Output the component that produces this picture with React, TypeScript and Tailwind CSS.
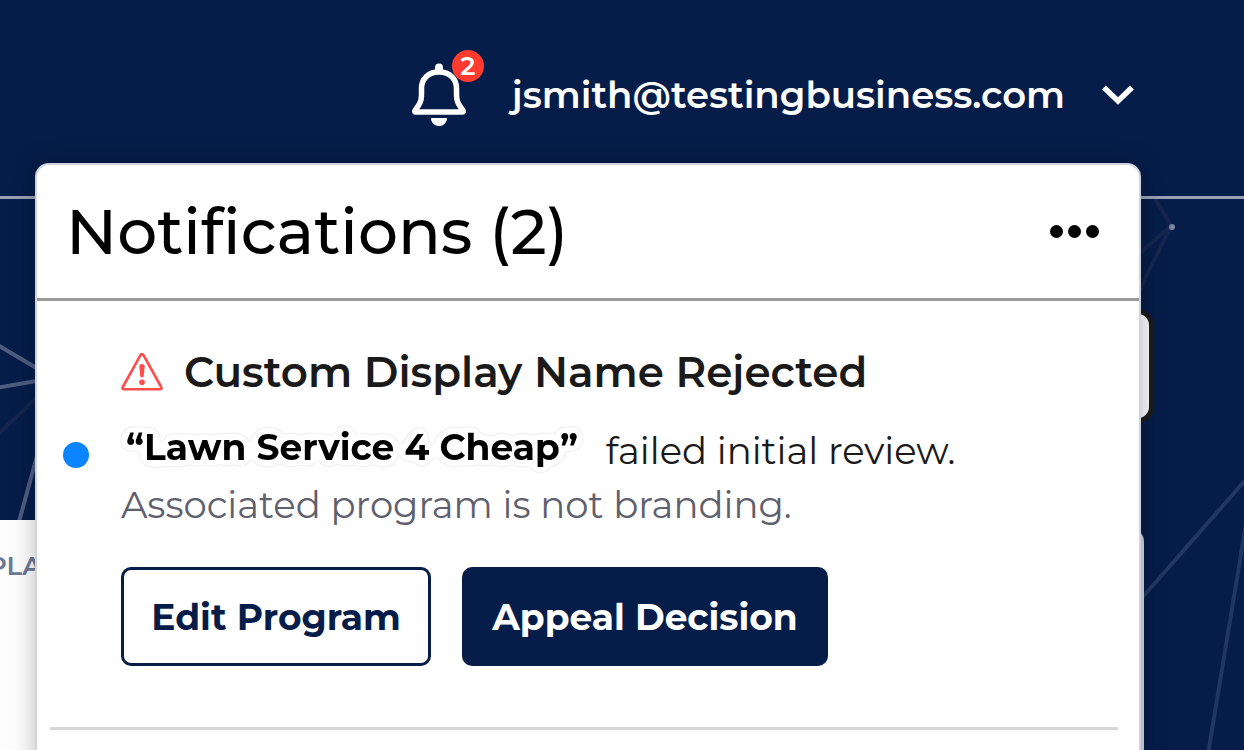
import { useState } from "react";

const account = "jsmith@testingbusiness.com";
const unread = 2;

function BellIcon() {
  return (
    <svg viewBox="0 0 56 64" className="h-16 w-14" fill="none" aria-hidden="true">
      <circle cx="28" cy="4.500" r="4" fill="white" />
      <path d="M24 4.500H32V9H24Z" fill="white" />
      <path
        d="M28 9C17 9 10.500 16 10.500 25.500V32C10.500 39 8 42 4 47.500Q3 49 5 49H51Q53 49 52 47.500C48 42 45.500 39 45.500 32V25.500C45.500 16 39 9 28 9Z"
        stroke="white"
        strokeWidth="5.500"
        strokeLinejoin="round"
      />
      <path d="M20 55H36C36 59.500 32.500 63 28 63S20 59.500 20 55Z" fill="white" />
    </svg>
  );
}

function WarningIcon() {
  return (
    <svg viewBox="0 0 42 38" className="h-[38px] w-[42px] shrink-0" fill="none" aria-hidden="true">
      <path
        d="M19.500 2.200L1.800 34Q0.800 36.200 3 36.200H39Q41.200 36.200 40.200 34L22.500 2.200Q21 0 19.500 2.200Z"
        stroke="#ff4d4d"
        strokeWidth="2.600"
        strokeLinejoin="round"
      />
      <path d="M18.300 13Q18.300 11 21 11T23.700 13L22.700 23.500Q21 25.500 19.300 23.500Z" fill="#ff4d4d" />
      <circle cx="21" cy="29.200" r="2.800" fill="#ff4d4d" />
    </svg>
  );
}

// Constellation pattern behind the hero area
function HeroLines() {
  return (
    <svg viewBox="0 0 1244 750" className="absolute top-0 left-0 h-[750px] w-[1244px]" fill="none" aria-hidden="true">
      <g stroke="#4d5d82" strokeWidth="4">
        <path d="M-4 344L60 382" />
        <path d="M-4 388L60 377" />
        <path d="M40 445L14 540" />
      </g>
      <g stroke="#14264f" strokeWidth="4">
        <path d="M-4 436L60 376" />
        <path d="M1154 196L1171 226L1120 270M1171 226L1130 310" />
      </g>
      <g stroke="#213660" strokeWidth="4">
        <path d="M1140 600L1250 475" />
        <path d="M1250 500L1207 760" />
      </g>
      <circle cx="1172" cy="227" r="3" fill="#7785a3" />
    </svg>
  );
}

// Soft rounded outline that follows the letters
function OutlineFilter() {
  return (
    <svg className="absolute size-0" aria-hidden="true">
      <filter id="outline" x="-10%" y="-50%" width="120%" height="200%" colorInterpolationFilters="sRGB">
        <feGaussianBlur in="SourceAlpha" stdDeviation="4" />
        <feComponentTransfer result="outer">
          <feFuncA type="linear" slope="60" intercept="-1.200" />
        </feComponentTransfer>
        <feMorphology in="outer" operator="erode" radius="1" result="inner" />
        <feFlood floodColor="#f1f1f1" />
        <feComposite in2="outer" operator="in" result="edge" />
        <feFlood floodColor="#ffffff" />
        <feComposite in2="inner" operator="in" result="body" />
        <feMerge>
          <feMergeNode in="edge" />
          <feMergeNode in="body" />
          <feMergeNode in="SourceGraphic" />
        </feMerge>
      </filter>
    </svg>
  );
}

function Notification() {
  return (
    <li className="mr-[21px] ml-[13px] border-b-[3px] border-[#d6d6d6] pt-[43px] pb-[61px]">
      <div className="ml-[71px]">
        <div className="flex items-center gap-[21px]">
          <WarningIcon />
          <h2 className="text-[42px] leading-[56px] font-semibold whitespace-nowrap text-[#1a1a1a]">
            Custom Display Name Rejected
          </h2>
        </div>
        <div className="mt-[23px] -ml-[58px] flex items-center">
          <span className="mr-[37px] size-[26px] shrink-0 rounded-full bg-[#0a84ff]" />
          <p className="flex items-center gap-[28px] text-[37px] leading-[48px] whitespace-nowrap text-[#1a1a1a]">
            <strong className="pb-4 text-[36px] font-bold text-black [filter:url(#outline)]">
              “Lawn Service 4 Cheap”
            </strong>
            <span className="pb-2">failed initial review.</span>
          </p>
        </div>
        <p className="-mt-2 text-[37px] leading-[52px] whitespace-nowrap text-[#5f606e]">
          Associated program is not branding.
        </p>
        <div className="mt-9 flex gap-[31px]">
          <button className="h-[99px] w-[310px] rounded-[10px] border-[3px] border-[#061d49] bg-white text-[36px] font-bold whitespace-nowrap text-[#061d49]">
            Edit Program
          </button>
          <button className="h-[99px] w-[366px] rounded-[10px] bg-[#061d49] text-[36px] font-bold whitespace-nowrap text-white">
            Appeal Decision
          </button>
        </div>
      </div>
    </li>
  );
}

function NotificationPanel() {
  return (
    <section className="absolute top-[163px] right-[103px] left-[35px] h-[640px] rounded-t-[14px] border-2 border-[#cfd3de] bg-white shadow-[0_0_24px_rgba(0,0,0,0.25)]">
      <header className="flex h-[136px] items-center justify-between border-b-[3px] border-[#999] pr-10 pl-[29px]">
        <h1 className="text-[63px] leading-[80px] font-medium whitespace-nowrap text-black [font-variant-ligatures:none]">
          Notifications ({unread})
        </h1>
        <button aria-label="More options" className="flex gap-[5px]">
          <span className="size-[13px] rounded-full bg-black" />
          <span className="size-[13px] rounded-full bg-black" />
          <span className="size-[13px] rounded-full bg-black" />
        </button>
      </header>
      <ul>
        <Notification />
      </ul>
    </section>
  );
}

export default function App() {
  const [open, setOpen] = useState(true);

  return (
    <div className="relative flex h-screen min-h-[750px] flex-col overflow-hidden bg-[#061d49] font-['Montserrat','Inter',sans-serif]">
      <OutlineFilter />
      <HeroLines />
      <header className="relative flex h-[199px] items-start justify-end border-b-[3px] border-[#97a1b6] bg-[#061d49] pt-[63px] pr-[109px]">
        <button aria-label="Notifications" className="relative mr-[45px]" onClick={() => setOpen(!open)}>
          <BellIcon />
          <span className="absolute -top-[13px] -right-[17px] flex size-8 items-center justify-center rounded-full bg-[#ff3b30] text-[26px] font-semibold text-white">
            {unread}
          </span>
        </button>
        <button className="flex h-16 items-center gap-[36px] text-[37px] font-semibold whitespace-nowrap text-white">
          {account}
          <svg viewBox="0 0 34 20" className="h-5 w-[34px]" fill="none" aria-hidden="true">
            <path d="M3 2.500L17 16L31 2.500" stroke="white" strokeWidth="5.500" />
          </svg>
        </button>
      </header>
      <main className="relative flex grow flex-col">
        <div className="grow">
          <div className="mt-[110px] mr-[90px] ml-auto h-[114px] w-40 rounded-[16px] border-[5px] border-[#1c1c1c] bg-[#fafafa]" />
        </div>
        <div className="flex h-[230px] shrink-0">
          <div className="w-20 bg-[#fdfdfe] pt-[28px]">
            <span className="-ml-[12px] text-[26px] leading-9 font-semibold text-[#6c7897]">PLAN</span>
          </div>
          <div className="mt-2 mr-[100px] ml-auto w-20 rounded-tr-[14px] bg-[#ccd7df]" />
        </div>
      </main>
      {open && <NotificationPanel />}
    </div>
  );
}
